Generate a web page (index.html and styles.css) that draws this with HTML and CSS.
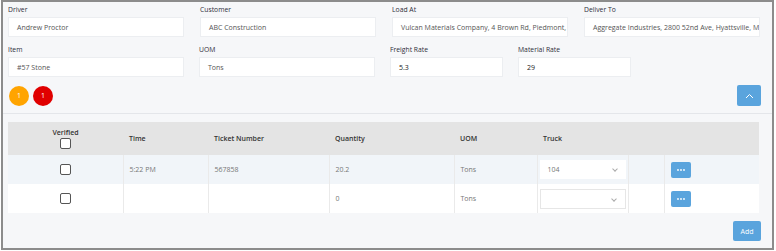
FILE: index.html
```html
<!DOCTYPE html>
<html lang="en">
<head>
  <meta charset="UTF-8">
  <title>Ticket Entry</title>
  <link rel="stylesheet" href="styles.css">
</head>
<body>
  <div class="frame">
    <!-- Load details -->
    <div class="fields">
      <div class="field">
        <label>Driver</label>
        <div class="box">Andrew Proctor</div>
      </div>
      <div class="field">
        <label>Customer</label>
        <div class="box">ABC Construction</div>
      </div>
      <div class="field">
        <label>Load At</label>
        <div class="box">Vulcan Materials Company, 4 Brown Rd, Piedmont,</div>
      </div>
      <div class="field">
        <label>Deliver To</label>
        <div class="box">Aggregate Industries, 2800 52nd Ave, Hyattsville, M</div>
      </div>
    </div>

    <div class="fields fields-second">
      <div class="field">
        <label>Item</label>
        <div class="box">#57 Stone</div>
      </div>
      <div class="field">
        <label>UOM</label>
        <div class="box">Tons</div>
      </div>
      <div class="field">
        <label>Freight Rate</label>
        <div class="box dark">5.3</div>
      </div>
      <div class="field">
        <label>Material Rate</label>
        <div class="box dark">29</div>
      </div>
    </div>

    <!-- Status badges + collapse -->
    <div class="status-row">
      <div class="badges">
        <span class="badge orange">1</span>
        <span class="badge red">1</span>
      </div>
      <button class="btn-blue btn-up">
        <svg width="9" height="6" viewBox="0 0 9 6"><path d="M1 5 L4.5 1.5 L8 5" fill="none" stroke="#fff" stroke-width="1"/></svg>
      </button>
    </div>

    <div class="divider"></div>

    <!-- Tickets -->
    <table class="tickets">
      <colgroup>
        <col style="width:115px">
        <col style="width:85px">
        <col style="width:121px">
        <col style="width:125px">
        <col style="width:83px">
        <col style="width:91px">
        <col style="width:36px">
        <col style="width:95px">
      </colgroup>
      <thead>
        <tr>
          <th class="center">Verified<br><span class="check"></span></th>
          <th>Time</th>
          <th>Ticket Number</th>
          <th>Quantity</th>
          <th>UOM</th>
          <th>Truck</th>
          <th></th>
          <th></th>
        </tr>
      </thead>
      <tbody>
        <tr class="shade">
          <td class="center"><span class="check"></span></td>
          <td>5:22 PM</td>
          <td>567858</td>
          <td>20.2</td>
          <td>Tons</td>
          <td class="select-cell"><div class="select">104<span class="caret"></span></div></td>
          <td></td>
          <td>
            <button class="btn-blue btn-dots">
              <svg width="8" height="2" viewBox="0 0 8 2"><circle cx="1" cy="1" r="0.9" fill="#fff"/><circle cx="4" cy="1" r="0.9" fill="#fff"/><circle cx="7" cy="1" r="0.9" fill="#fff"/></svg>
            </button>
          </td>
        </tr>
        <tr>
          <td class="center"><span class="check"></span></td>
          <td></td>
          <td></td>
          <td>0</td>
          <td>Tons</td>
          <td class="select-cell"><div class="select empty"><span class="caret"></span></div></td>
          <td></td>
          <td>
            <button class="btn-blue btn-dots">
              <svg width="8" height="2" viewBox="0 0 8 2"><circle cx="1" cy="1" r="0.9" fill="#fff"/><circle cx="4" cy="1" r="0.9" fill="#fff"/><circle cx="7" cy="1" r="0.9" fill="#fff"/></svg>
            </button>
          </td>
        </tr>
      </tbody>
    </table>

    <div class="actions">
      <button class="btn-blue btn-add">Add</button>
    </div>
  </div>
</body>
</html>
```

FILE: styles.css
```css
body {
  margin: 0;
  background: #fff;
  font-family: "Open Sans", Arial, sans-serif;
  color: #333;
}

.frame {
  box-sizing: border-box;
  width: 773px;
  height: 250px;
  margin-left: 1px;
  border: 2px solid #8c8c8c;
  background: #f6f7f9;
  padding: 3px 10px 0 5px;
}

.fields {
  display: grid;
  grid-template-columns: repeat(4, 176px);
  column-gap: 16px;
}

.fields-second {
  grid-template-columns: 176px 176px 113px 113px;
  column-gap: 15px;
  margin-top: 8px;
}

.field label {
  display: block;
  font-size: 6.8px;
  font-weight: 500;
  color: #2e2e3a;
  height: 12px;
  line-height: 10px;
}

.box {
  height: 20px;
  line-height: 20px;
  padding: 0 8px;
  background: #fff;
  border: 1px solid #eceef1;
  box-sizing: border-box;
  font-size: 7px;
  color: #555;
  white-space: nowrap;
  overflow: hidden;
}

.box.dark {
  color: #222;
}

.status-row {
  display: flex;
  justify-content: space-between;
  align-items: center;
  margin-top: 8px;
  height: 21px;
}

.badges {
  display: flex;
  gap: 4px;
  padding-left: 1px;
}

.badge {
  width: 20px;
  height: 20px;
  border-radius: 50%;
  color: #fff;
  font-size: 7px;
  line-height: 20px;
  text-align: center;
}

.badge.orange { background: #ffa400; }
.badge.red { background: #e00000; }

.btn-blue {
  border: none;
  border-radius: 2px;
  background: #5aa4dd;
  color: #fff;
  font-family: inherit;
  padding: 0;
  cursor: pointer;
}

.btn-up {
  width: 24px;
  height: 21px;
  margin-right: 1px;
  display: flex;
  align-items: center;
  justify-content: center;
}

.divider {
  height: 1px;
  background: #e4e6ea;
  margin: 7px -10px 0 -5px;
}

.tickets {
  margin-top: 8px;
  border-collapse: collapse;
  table-layout: fixed;
  width: 751px;
  font-size: 7px;
}

.tickets th {
  background: #e4e4e4;
  height: 33px;
  text-align: left;
  font-weight: 600;
  font-size: 7px;
  color: #333;
  padding: 0 6px;
  line-height: 10px;
}

.tickets td {
  height: 29px;
  padding: 0 6px;
  color: #777;
  border-left: 1px solid #eaeaea;
  background: #fff;
}

.tickets td:first-child {
  border-left: none;
}

.tickets tr.shade td {
  background: #f1f5f9;
}

.tickets .center {
  text-align: center;
}

.check {
  display: inline-block;
  width: 9px;
  height: 9px;
  border: 1px solid #555;
  border-radius: 2px;
  vertical-align: middle;
  background: #fff;
}

.select-cell {
  padding: 0 2px !important;
}

.select {
  position: relative;
  height: 19px;
  line-height: 19px;
  padding: 0 8px;
  background: #fff;
  color: #777;
}

.select.empty {
  border: 1px solid #e6e6e6;
  height: 20px;
  box-sizing: border-box;
}

.caret {
  position: absolute;
  right: 9px;
  top: 7px;
  width: 3px;
  height: 3px;
  border-right: 1px solid #aaa;
  border-bottom: 1px solid #aaa;
  transform: rotate(45deg);
}

.btn-dots {
  width: 20px;
  height: 16px;
  display: flex;
  align-items: center;
  justify-content: center;
}

.actions {
  display: flex;
  justify-content: flex-end;
  margin-top: 8px;
}

.btn-add {
  width: 28px;
  height: 20px;
  font-size: 7px;
  margin-right: 1px;
}
```
